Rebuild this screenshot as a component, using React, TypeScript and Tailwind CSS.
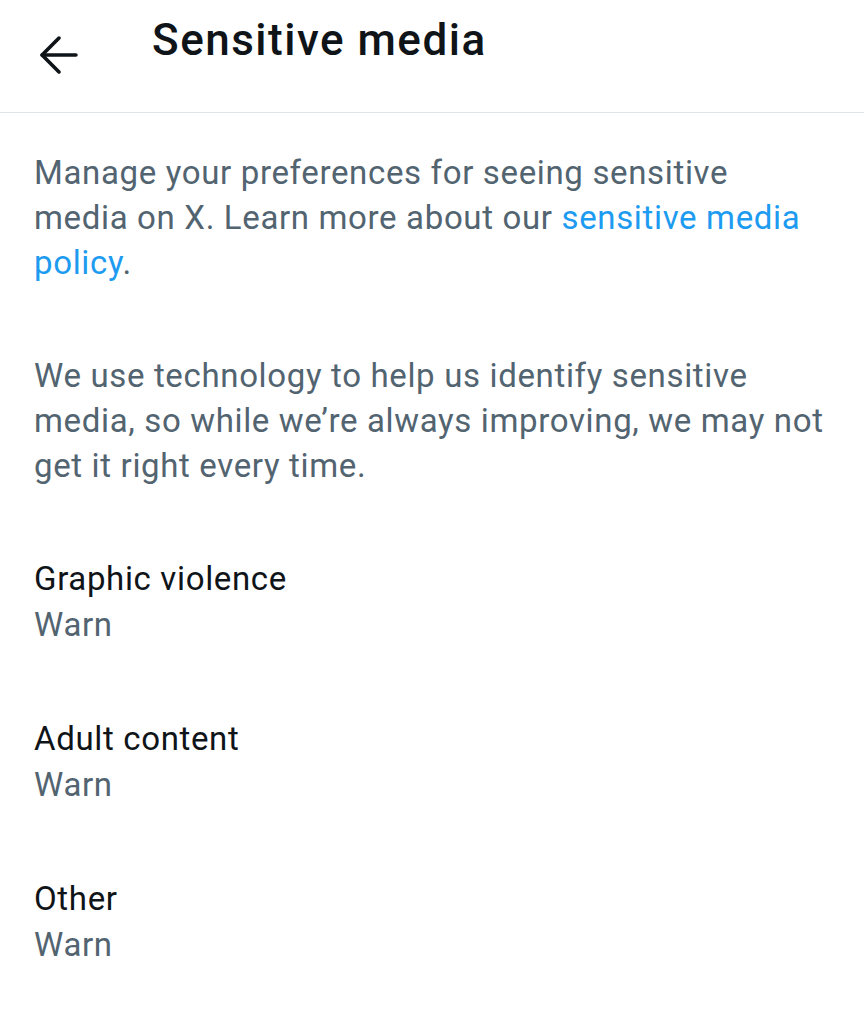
import { ArrowLeft } from "lucide-react";

const items = [
  { label: "Graphic violence", value: "Warn" },
  { label: "Adult content", value: "Warn" },
  { label: "Other", value: "Warn" },
];

export default function App() {
  return (
    <div
      className="w-[864px] min-h-[1019px] bg-white text-[#0f1419]"
      style={{ fontFamily: "Roboto, 'Noto Sans', sans-serif" }}
    >
      {/* header */}
      <div className="h-[113px] flex items-start border-b border-[#dfe4e8]">
        <div className="w-[152px] pl-[30px] pt-[26px]">
          <ArrowLeft size={58} strokeWidth={1.5} />
        </div>
        <h1 className="pt-[3px] text-[44px] leading-[74px] font-medium tracking-[1.5px]">
          Sensitive media
        </h1>
      </div>

      {/* content */}
      <div className="px-[34px] pt-[37px] flex flex-col gap-[68px] tracking-[0.65px]">
        <p className="text-[33px] leading-[45px] text-[#536471]">
          Manage your preferences for seeing sensitive media on X. Learn more
          about our <span className="text-[#1d9bf0]">sensitive media policy</span>.
        </p>
        <p className="text-[33px] leading-[45px] text-[#536471]">
          We use technology to help us identify sensitive media, so while we’re
          always improving, we may not get it right every time.
        </p>
        {items.map((item) => (
          <div key={item.label} className="flex flex-col">
            <span className="text-[33px] leading-[46px]">{item.label}</span>
            <span className="text-[33px] leading-[46px] text-[#536471]">
              {item.value}
            </span>
          </div>
        ))}
      </div>
    </div>
  );
}
